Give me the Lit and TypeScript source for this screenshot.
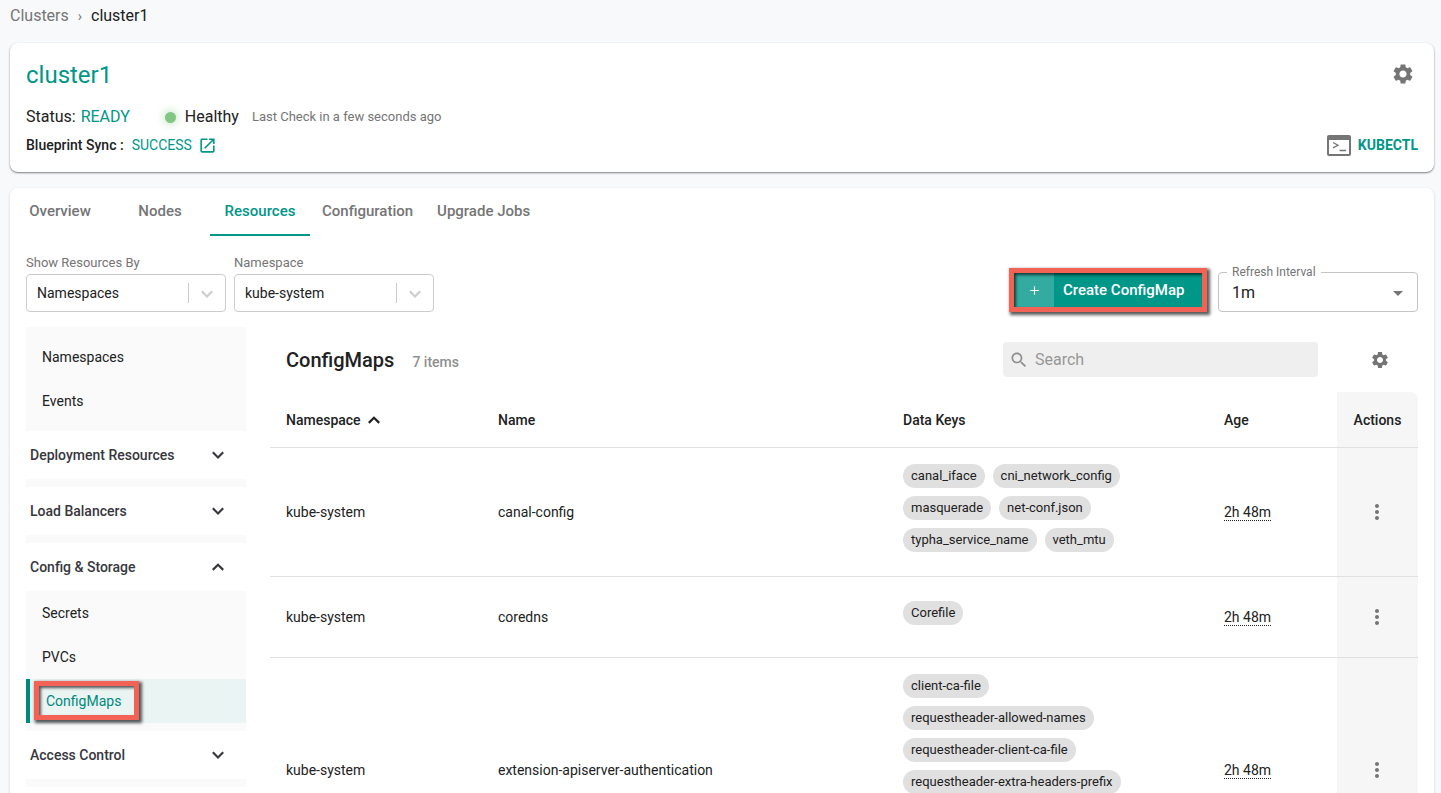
import { LitElement, html, css, svg } from "lit";
import { customElement, property } from "lit/decorators.js";
import { classMap } from "lit/directives/class-map.js";

const PATHS: Record<string, string> = {
  gear: "M19.14 12.94c.04-.3.06-.61.06-.94 0-.32-.02-.64-.07-.94l2.03-1.58c.18-.14.23-.41.12-.61l-1.92-3.32c-.12-.22-.37-.29-.59-.22l-2.39.96c-.5-.38-1.03-.7-1.62-.94l-.36-2.54c-.04-.24-.24-.41-.48-.41h-3.84c-.24 0-.43.17-.47.41l-.36 2.54c-.59.24-1.13.57-1.62.94l-2.39-.96c-.22-.08-.47 0-.59.22L2.74 8.87c-.12.21-.08.47.12.61l2.03 1.58c-.05.3-.09.63-.09.94s.02.64.07.94l-2.03 1.58c-.18.14-.23.41-.12.61l1.92 3.32c.12.22.37.29.59.22l2.39-.96c.5.38 1.03.7 1.62.94l.36 2.54c.05.24.24.41.48.41h3.84c.24 0 .44-.17.47-.41l.36-2.54c.59-.24 1.13-.56 1.62-.94l2.39.96c.22.08.47 0 .59-.22l1.92-3.32c.12-.22.07-.47-.12-.61l-2.01-1.58zM12 15.6c-1.98 0-3.6-1.62-3.6-3.6s1.62-3.6 3.6-3.6 3.6 1.62 3.6 3.6-1.62 3.6-3.6 3.6z",
  launch: "M19 19H5V5h7V3H5c-1.11 0-2 .9-2 2v14c0 1.1.89 2 2 2h14c1.1 0 2-.9 2-2v-7h-2v7zM14 3v2h3.59l-9.83 9.83 1.41 1.41L19 6.41V10h2V3h-7z",
  search: "M15.5 14h-.79l-.28-.27C15.41 12.59 16 11.11 16 9.5 16 5.91 13.09 3 9.5 3S3 5.91 3 9.5 5.91 16 9.5 16c1.61 0 3.09-.59 4.23-1.57l.27.28v.79l5 4.99L20.49 19l-4.99-5zm-6 0C7.01 14 5 11.99 5 9.5S7.01 5 9.5 5 14 7.01 14 9.5 11.99 14 9.5 14z",
  down: "M7.2 8.2 12 13l4.8-4.800L18.500 9.900 12 16.400 5.500 9.900z",
  up: "M7.200 16 12 11.200l4.800 4.800L18.500 14.300 12 7.800 5.500 14.300z",
  dots: "M12 8c1.1 0 2-.9 2-2s-.9-2-2-2-2 .9-2 2 .9 2 2 2zm0 2c-1.1 0-2 .9-2 2s.9 2 2 2 2-.9 2-2-.9-2-2-2zm0 6c-1.1 0-2 .9-2 2s.9 2 2 2 2-.9 2-2-.9-2-2-2z",
  triangle: "M7 10l5 5 5-5z",
  plus: "M20 13h-7v7h-2v-7H4v-2h7V4h2v7h7z",
};

@customElement("ui-icon")
class UiIcon extends LitElement {
  @property() name = "";

  static styles = css`
    :host {
      display: block;
      width: 24px;
      height: 24px;
      flex: none;
    }
    svg {
      display: block;
      width: 100%;
      height: 100%;
      fill: currentColor;
    }
  `;

  render() {
    return html`<svg viewBox="0 0 24 24" aria-hidden="true">${svg`<path d=${PATHS[this.name] ?? ""}></path>`}</svg>`;
  }
}

interface Group {
  title?: string;
  open?: boolean;
  items?: string[];
}

const TABS = ["Overview", "Nodes", "Resources", "Configuration", "Upgrade Jobs"];

const GROUPS: Group[] = [
  { items: ["Namespaces", "Events"] },
  { title: "Deployment Resources" },
  { title: "Load Balancers" },
  { title: "Config & Storage", open: true, items: ["Secrets", "PVCs", "ConfigMaps"] },
  { title: "Access Control" },
];

const ROWS = [
  {
    ns: "kube-system",
    name: "canal-config",
    keys: ["canal_iface", "cni_network_config", "masquerade", "net-conf.json", "typha_service_name", "veth_mtu"],
    age: "2h 48m",
  },
  { ns: "kube-system", name: "coredns", keys: ["Corefile"], age: "2h 48m" },
  {
    ns: "kube-system",
    name: "extension-apiserver-authentication",
    keys: [
      "client-ca-file",
      "requestheader-allowed-names",
      "requestheader-client-ca-file",
      "requestheader-extra-headers-prefix",
      "requestheader-group-headers",
      "requestheader-username-headers",
    ],
    age: "2h 48m",
  },
];

@customElement("app-root")
class AppRoot extends LitElement {
  @property() active = "ConfigMaps";

  static styles = css`
    :host {
      display: block;
      height: 100vh;
      overflow-y: auto;
      scrollbar-width: none;
      background: #f8f9fb;
      color: #212121;
      font-family: Roboto, "Liberation Sans", sans-serif;
      font-size: 14px;
      line-height: 20px;
      --teal: #009688;
      --grey: #757575;
    }
    * {
      box-sizing: border-box;
    }
    button,
    input,
    select {
      font: inherit;
      color: inherit;
      background: none;
      border: 0;
      margin: 0;
      padding: 0;
    }
    a {
      color: inherit;
      text-decoration: none;
    }
    h1,
    h2 {
      margin: 0;
      font-weight: 400;
    }
    .crumbs {
      display: flex;
      gap: 9px;
      padding: 4px 10px 0;
      font-size: 16px;
      line-height: 24px;
      color: var(--grey);
    }
    .crumbs .here {
      color: #212121;
    }
    .crumbs .sep {
      font-size: 14px;
    }
    .page {
      display: flex;
      flex-direction: column;
      gap: 16px;
      padding: 15px 7px 16px 10px;
    }
    .card {
      background: #fff;
      border-radius: 8px;
      box-shadow: 0 1px 3px rgba(0, 0, 0, 0.16);
    }
    .summary {
      display: flex;
      justify-content: space-between;
      padding: 16px 16px 13px;
      box-shadow: 0 1px 2px rgba(0, 0, 0, 0.5);
    }
    .summary .side {
      display: flex;
      flex-direction: column;
      align-items: flex-end;
      justify-content: space-between;
    }
    .summary h1 {
      font-size: 24px;
      line-height: 32px;
      color: var(--teal);
    }
    .line {
      display: flex;
      align-items: center;
    }
    .status {
      margin-top: 12px;
      font-size: 16px;
      line-height: 28px;
    }
    .teal {
      color: var(--teal);
    }
    .status .teal {
      margin-left: 5px;
    }
    .dot {
      width: 11px;
      height: 11px;
      margin: 0 9px 0 35px;
      border-radius: 50%;
      background: #81c784;
      box-shadow: 0 0 8px 2px rgba(129, 199, 132, 0.4);
    }
    .check {
      margin-left: 13px;
      font-size: 13px;
      color: var(--grey);
    }
    .sync {
      line-height: 28px;
      gap: 8px;
    }
    .sync a {
      display: flex;
      align-items: center;
      gap: 6px;
    }
    .sync ui-icon {
      width: 19px;
      height: 19px;
    }
    .strong {
      font-weight: 500;
    }
    .icon-button {
      display: grid;
      place-items: center;
      color: var(--grey);
      cursor: pointer;
    }
    .side .icon-button {
      padding: 3px;
    }
    .kubectl {
      display: flex;
      align-items: center;
      gap: 7px;
      height: 28px;
      font-weight: 700;
      color: var(--teal);
      cursor: pointer;
    }
    .kubectl svg {
      display: block;
      width: 24px;
      height: 21px;
    }
    .tabs {
      display: flex;
    }
    .tab {
      min-width: 100px;
      height: 48px;
      padding: 0 12px;
      border-bottom: 2px solid transparent;
      font-weight: 500;
      font-size: 15px;
      color: var(--grey);
      cursor: pointer;
    }
    .tab.on {
      color: var(--teal);
      border-color: var(--teal);
    }
    .body {
      padding: 16px;
    }
    .filters {
      display: flex;
      align-items: flex-end;
      justify-content: space-between;
    }
    .filters .set {
      display: flex;
      align-items: flex-end;
      gap: 8px;
    }
    .field label {
      display: block;
      font-size: 13px;
      line-height: 22px;
      color: var(--grey);
    }
    .pick {
      display: grid;
      grid-template-columns: 1fr 37px;
      align-items: center;
      width: 200px;
      height: 38px;
      border: 1px solid #ccc;
      border-radius: 4px;
    }
    .pick select,
    .interval select {
      grid-area: 1 / 1 / 2 / 3;
      width: 100%;
      height: 100%;
      padding: 0 10px;
      appearance: none;
      outline: none;
    }
    .pick .arrow {
      grid-area: 1 / 2;
      display: grid;
      place-items: center;
      height: 20px;
      border-left: 1px solid #ccc;
      color: #ccc;
      pointer-events: none;
    }
    .pick ui-icon {
      width: 22px;
      height: 22px;
    }
    .marked {
      position: relative;
    }
    .mark {
      position: absolute;
      border: 5px solid #f26355;
      box-shadow: 2px 2px 3px 1px rgba(0, 0, 0, 0.65), inset 2px 2px 3px rgba(0, 0, 0, 0.65);
      pointer-events: none;
    }
    .create-wrap {
      margin: 0 8px 5px 0;
    }
    .create-mark {
      inset: -5px;
    }
    .create {
      display: flex;
      align-items: center;
      height: 34px;
      background: var(--teal);
      color: #fff;
      font-size: 15px;
      font-weight: 500;
      cursor: pointer;
    }
    .create .plus {
      display: grid;
      place-items: center;
      width: 40px;
      height: 34px;
      background: #33aba0;
    }
    .create .plus ui-icon {
      width: 13px;
      height: 13px;
    }
    .create .text {
      width: 148px;
      padding-left: 9px;
      text-align: left;
    }
    .interval {
      display: grid;
      grid-template-columns: 1fr 38px;
      width: 200px;
      margin: 0;
      padding: 0;
      height: 46px;
      border: 1px solid #c4c4c4;
      border-radius: 4px;
    }
    .interval legend {
      margin-left: 8px;
      padding: 0 5px;
      font-size: 12px;
      line-height: 12px;
      color: var(--grey);
    }
    .interval select {
      height: 33px;
      padding: 0 13px 4px;
      font-size: 16px;
    }
    .interval ui-icon {
      grid-area: 1 / 2;
      align-self: center;
      margin-bottom: 4px;
      justify-self: center;
      color: var(--grey);
      pointer-events: none;
    }
    .content {
      display: flex;
      gap: 24px;
      margin-top: 15px;
    }
    .menu {
      flex: none;
      width: 220px;
    }
    .list {
      background: #fafafa;
      padding-bottom: 8px;
    }
    .list.top {
      padding-top: 8px;
    }
    .item {
      display: flex;
      align-items: center;
      height: 44px;
      padding: 0 16px;
    }
    .item.on {
      border-left: 4px solid #00897b;
      background: #eaf4f3;
      color: #00897b;
    }
    .item-mark {
      inset: -10px -18px -9px -12px;
    }
    .group {
      display: flex;
      align-items: center;
      justify-content: space-between;
      width: 100%;
      height: 48px;
      padding: 0 17px 0 4px;
      font-weight: 500;
      color: #37373d;
      cursor: pointer;
    }
    .group ui-icon,
    .sort ui-icon {
      width: 22px;
      height: 22px;
    }
    .main {
      flex: 1;
      min-width: 0;
    }
    .head {
      display: flex;
      align-items: center;
      height: 65px;
      padding: 0 14px 0 16px;
    }
    .head h2 {
      font-size: 20px;
      line-height: 28px;
      font-weight: 500;
    }
    .count {
      margin: 4px auto 0 18px;
      font-weight: 500;
      color: #8f8f8f;
    }
    .search {
      display: flex;
      align-items: center;
      gap: 6px;
      width: 315px;
      height: 35px;
      padding: 0 6px;
      border-radius: 4px;
      background: #efefef;
      font-size: 16px;
      color: #8f8f8f;
    }
    .search ui-icon {
      width: 20px;
      height: 20px;
    }
    .search input {
      flex: 1;
      min-width: 0;
      outline: none;
    }
    .search input::placeholder {
      color: #979797;
      opacity: 1;
    }
    .head .icon-button {
      width: 48px;
      height: 48px;
      margin-left: 38px;
    }
    .head .icon-button ui-icon {
      width: 20px;
      height: 20px;
    }
    table {
      width: 100%;
      table-layout: fixed;
      border-collapse: separate;
      border-spacing: 0;
    }
    th,
    td {
      padding: 16px;
      border-bottom: 1px solid #e0e0e0;
      text-align: left;
      vertical-align: middle;
      font-weight: 400;
    }
    th {
      height: 56px;
      padding: 0 16px;
      font-weight: 500;
    }
    .c-ns {
      width: 212px;
    }
    .c-keys {
      width: 321px;
    }
    .c-age {
      width: 129px;
    }
    .c-act {
      width: 81px;
    }
    .sort {
      display: flex;
      align-items: center;
      gap: 2px;
    }
    .act {
      padding: 16px;
      background: #f6f6f6;
      text-align: center;
    }
    th.act {
      border-top-right-radius: 8px;
    }
    .act .icon-button {
      width: 48px;
      height: 48px;
    }
    .chips {
      display: flex;
      flex-wrap: wrap;
      gap: 0 8px;
      max-width: 272px;
    }
    .chip {
      height: 24px;
      margin-bottom: 8px;
      padding: 0 8px;
      border-radius: 12px;
      background: #e0e0e0;
      font-size: 13px;
      line-height: 24px;
    }
    .age {
      text-decoration: underline dotted 1px;
      text-underline-offset: 3px;
      text-decoration-skip-ink: none;
    }
  `;

  private group(g: Group) {
    return html`
      ${g.title
        ? html`<button class="group" aria-expanded=${g.open ? "true" : "false"}>
            ${g.title}<ui-icon name=${g.open ? "up" : "down"}></ui-icon>
          </button>`
        : ""}
      <div class=${classMap({ list: true, top: !g.title })}>
        ${(g.items ?? []).map((i) =>
          i === this.active
            ? html`<a class="item on" href="#"><span class="marked">${i}<span class="mark item-mark"></span></span></a>`
            : html`<a class="item" href="#">${i}</a>`
        )}
      </div>
    `;
  }

  private pick(id: string, label: string, value: string) {
    return html`<div class="field">
      <label for=${id}>${label}</label>
      <div class="pick">
        <select id=${id}><option>${value}</option></select>
        <span class="arrow"><ui-icon name="down"></ui-icon></span>
      </div>
    </div>`;
  }

  render() {
    return html`
      <nav class="crumbs" aria-label="Breadcrumb">
        <a href="#">Clusters</a><span class="sep">›</span><span class="here">cluster1</span>
      </nav>
      <div class="page">
        <section class="card summary">
          <div>
            <h1>cluster1</h1>
            <div class="line status">
              Status: <span class="teal">READY</span>
              <span class="dot"></span>Healthy
              <span class="check">Last Check in a few seconds ago</span>
            </div>
            <div class="line sync">
              <span class="strong">Blueprint Sync :</span>
              <a class="teal" href="#">SUCCESS <ui-icon name="launch"></ui-icon></a>
            </div>
          </div>
          <div class="side">
            <button class="icon-button" aria-label="Cluster settings"><ui-icon name="gear"></ui-icon></button>
            <button class="kubectl">
              <svg viewBox="0 0 24 21" aria-hidden="true">
                <rect x="1" y="1" width="22" height="19" rx="1" fill="none" stroke="#757575" stroke-width="2"></rect>
                <rect x="1" y="1" width="22" height="4" fill="#757575"></rect>
                <path d="M6 7.5l5 2.7-5 2.7M12.500 15.500h6.500" fill="none" stroke="#757575" stroke-width="1.300"></path>
              </svg>
              KUBECTL
            </button>
          </div>
        </section>
        <section class="card">
          <div class="tabs" role="tablist">
            ${TABS.map(
              (t) => html`<button
                role="tab"
                aria-selected=${t === "Resources" ? "true" : "false"}
                class=${classMap({ tab: true, on: t === "Resources" })}
              >
                ${t}
              </button>`
            )}
          </div>
          <div class="body">
            <div class="filters">
              <div class="set">
                ${this.pick("by", "Show Resources By", "Namespaces")} ${this.pick("ns", "Namespace", "kube-system")}
              </div>
              <div class="set">
                <div class="marked create-wrap">
                  <button class="create">
                    <span class="plus"><ui-icon name="plus"></ui-icon></span><span class="text">Create ConfigMap</span>
                  </button>
                  <span class="mark create-mark"></span>
                </div>
                <fieldset class="interval">
                  <legend><label for="interval">Refresh Interval</label></legend>
                  <select id="interval"><option>1m</option></select>
                  <ui-icon name="triangle"></ui-icon>
                </fieldset>
              </div>
            </div>
            <div class="content">
              <nav class="menu" aria-label="Resources">${GROUPS.map((g) => this.group(g))}</nav>
              <div class="main">
                <div class="head">
                  <h2>ConfigMaps</h2>
                  <span class="count">7 items</span>
                  <label class="search"
                    ><ui-icon name="search"></ui-icon><input type="search" placeholder="Search" aria-label="Search"
                  /></label>
                  <button class="icon-button" aria-label="Table settings"><ui-icon name="gear"></ui-icon></button>
                </div>
                <table>
                  <thead>
                    <tr>
                      <th class="c-ns"><span class="sort">Namespace <ui-icon name="up"></ui-icon></span></th>
                      <th>Name</th>
                      <th class="c-keys">Data Keys</th>
                      <th class="c-age">Age</th>
                      <th class="c-act act">Actions</th>
                    </tr>
                  </thead>
                  <tbody>
                    ${ROWS.map(
                      (r) => html`<tr>
                        <td>${r.ns}</td>
                        <td>${r.name}</td>
                        <td><div class="chips">${r.keys.map((k) => html`<span class="chip">${k}</span>`)}</div></td>
                        <td><span class="age">${r.age}</span></td>
                        <td class="act">
                          <button class="icon-button" aria-label="Row actions"><ui-icon name="dots"></ui-icon></button>
                        </td>
                      </tr>`
                    )}
                  </tbody>
                </table>
              </div>
            </div>
          </div>
        </section>
      </div>
    `;
  }
}
